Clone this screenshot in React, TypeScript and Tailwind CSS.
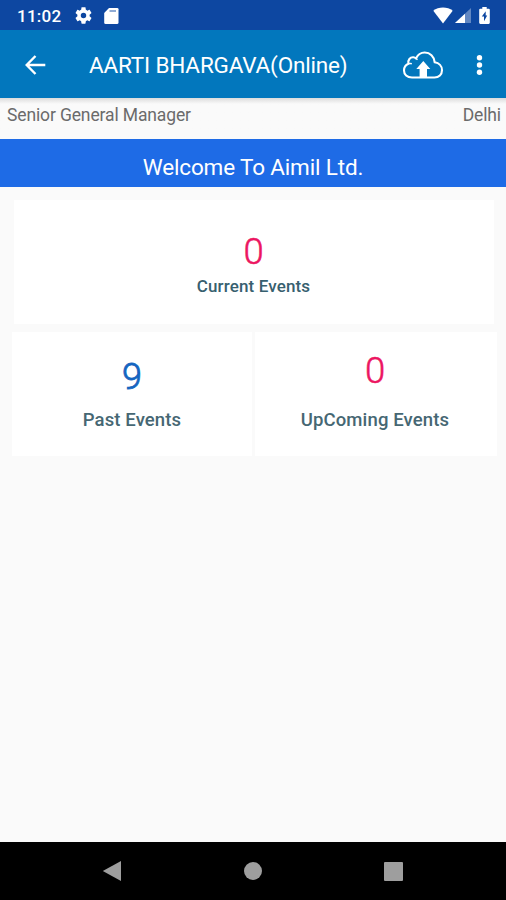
import React from "react";

function StatusBar() {
  return (
    <div className="flex h-[30px] shrink-0 items-center bg-[#0d47a1] pl-[17px] pr-[16px] text-white">
      <span className="w-[58px] whitespace-nowrap pt-px text-[17px] font-medium leading-[30px] tracking-[0.25px]">11:02</span>
      <svg className="mt-px h-[17px] w-[17px]" viewBox="2 2 20 20" fill="currentColor">
        <path d="M19.14 12.94c.04-.3.06-.61.06-.94 0-.32-.02-.64-.07-.94l2.03-1.58c.18-.14.23-.41.12-.61l-1.92-3.32c-.12-.22-.37-.29-.59-.22l-2.39.96c-.5-.38-1.03-.7-1.62-.94l-.36-2.54c-.04-.24-.24-.41-.48-.41h-3.84c-.24 0-.43.17-.47.41l-.36 2.54c-.59.24-1.13.57-1.62.94l-2.39-.96c-.22-.08-.47 0-.59.22L2.74 8.87c-.12.21-.08.47.12.61l2.03 1.58c-.05.3-.09.63-.09.94s.02.64.07.94l-2.03 1.58c-.18.14-.23.41-.12.61l1.92 3.32c.12.22.37.29.59.22l2.39-.96c.5.38 1.03.7 1.62.94l.36 2.54c.05.24.24.41.48.41h3.84c.24 0 .44-.17.47-.41l.36-2.54c.59-.24 1.13-.56 1.62-.94l2.39.96c.22.08.47 0 .59-.22l1.92-3.32c.12-.22.07-.47-.12-.61l-2.01-1.58zM12 15.2a3.2 3.2 0 1 1 0-6.4 3.2 3.2 0 0 1 0 6.4z" />
      </svg>
      <svg className="ml-[12px] mt-px h-[16px] w-[15px]" viewBox="0 0 15 16" fill="none">
        <path d="M5 0h8.2Q14.5 0 14.5 1.3v13.2Q14.5 16 13 16H1.6Q.2 16 .2 14.5V5z" fill="currentColor" />
        <path d="M5.500 3h6.500" stroke="#0d47a1" strokeWidth="1.400" opacity=".65" />
      </svg>
      <svg className="ml-auto h-[17px] w-[20px]" viewBox="0 0 20 17" fill="currentColor">
        <path d="M10 16.500.3 3.700C3 1.600 6.300.5 10 .5s7 1.100 9.700 3.200z" />
      </svg>
      <svg className="ml-[2px] mt-px h-[15px] w-[16px]" viewBox="0 0 16 16" preserveAspectRatio="none" fill="currentColor">
        <path d="M16 0v16H0z" opacity=".35" />
        <path d="M10 6v10H0z" />
      </svg>
      <svg className="ml-[8px] h-[17px] w-[11px]" viewBox="0 0 11 17" fill="none">
        <path d="M3.300 0h4.400v1.700H9.700q1.100 0 1.100 1.100v13q0 1.100-1.100 1.100H1.300Q.2 16.900.2 15.800v-13Q.2 1.700 1.300 1.700h2z" fill="currentColor" />
        <path d="M6.700 4.200 2.800 9.500h2.200v4.800L8.200 8.600H6.700z" fill="#0d47a1" />
      </svg>
    </div>
  );
}

function AppBar() {
  return (
    <header className="flex h-[68px] shrink-0 items-center bg-[#0277bd] pl-[24.5px] pr-[22px] text-white">
      <svg className="mt-[1px] h-[20px] w-[21px]" viewBox="0 0 21 20" fill="none" stroke="currentColor" strokeWidth="2.400">
        <path d="M10.500 1 1.700 10l8.800 9M2 10h18.300" />
      </svg>
      <h1 className="ml-[43.5px] w-[262px] whitespace-nowrap pt-[2px] text-[22.5px] font-normal leading-7 tracking-[-0.17px]">AARTI BHARGAVA(Online)</h1>
      <svg className="ml-[51px] mt-[1px] h-[28px] w-[42px]" viewBox="0 0 42 28" fill="none">
        <path d="M10 26.500C5 26.500 2 23.300 2 19.500c0-3.400 1.800-5.600 4.400-6.700C5.600 9 8.200 6 11.400 6.300c1 .1 1.800.5 2.600 1.100C15.600 4 18.800 1.500 22.700 1.500c5.300 0 9.500 3.800 10 9.800 4.300.7 7.300 3.800 7.300 7.900 0 4.100-3.100 7.300-7.500 7.300z" stroke="currentColor" strokeWidth="2.100" strokeLinejoin="round" />
        <path d="M6.400 12.800c1.200-.4 2.300-.4 3.400 0M14 7.400l1.500 1.300" stroke="currentColor" strokeWidth="1.500" />
        <path d="m21.300 10 7 8h-3.300v8.500h-7.400V18h-3.300z" fill="currentColor" />
      </svg>
      <svg className="ml-auto mt-[1px] h-[22px] w-[8px]" viewBox="0 0 8 22" fill="currentColor">
        <circle cx="3.500" cy="3.700" r="2.700" />
        <circle cx="3.500" cy="11" r="2.700" />
        <circle cx="3.500" cy="18.300" r="2.700" />
      </svg>
    </header>
  );
}

function NavBar() {
  return (
    <nav className="mt-auto flex h-[58px] shrink-0 items-center bg-black pl-[102px] pr-[103px] text-[#9e9e9e]">
      <svg className="h-[22px] w-[19px]" viewBox="0 0 19 22" fill="currentColor">
        <path d="M19 1v20L.8 11z" />
      </svg>
      <span className="ml-[123px] h-[18px] w-[18px] rounded-full bg-current" />
      <span className="ml-auto h-[19px] w-[19px] rounded-[1px] bg-current" />
    </nav>
  );
}

export default function App() {
  return (
    <div className="flex h-[900px] w-[506px] flex-col overflow-hidden bg-[#fafafa] font-[Roboto,sans-serif]">
      <StatusBar />
      <AppBar />
      <div className="flex h-[41px] shrink-0 justify-between bg-linear-to-b from-[#dcdcdc] to-[#fafafa] to-[6px] pl-[7px] pr-[5px] pt-[5px] text-[17.5px] leading-6 tracking-[-0.13px] text-[#6b6b6b]">
        <span>Senior General Manager</span>
        <span>Delhi</span>
      </div>
      <div className="h-[48px] shrink-0 bg-[#1e6be6] pt-[14px] text-center text-[22.5px] leading-7 tracking-[-0.15px] text-white">Welcome To Aimil Ltd.</div>
      <main className="pl-[12px] pr-[9px] pt-[13px]">
        <section className="ml-[2px] mr-[3px] flex h-[124px] flex-col items-center bg-white pr-[1px] pt-[32px]">
          <span className="text-[36.5px] font-light leading-10 text-[#ec1561] [-webkit-text-stroke:0.5px_currentColor]">0</span>
          <span className="mt-[2px] text-[17px] font-medium leading-6 tracking-[0.14px] text-[#37606f]">Current Events</span>
        </section>
        <div className="mt-[8px] flex h-[124px] gap-[3px]">
          <section className="flex w-[240px] flex-col items-center bg-white pt-[25px]">
            <span className="text-[36px] font-light leading-10 text-[#1565c0] [-webkit-text-stroke:0.8px_currentColor]">9</span>
            <span className="mt-[11px] text-[18.5px] font-medium leading-6 tracking-[0.12px] text-[#466773]">Past Events</span>
          </section>
          <section className="flex flex-1 flex-col items-center bg-white pr-[2px] pt-[19px]">
            <span className="text-[36.5px] font-light leading-10 text-[#ec1561] [-webkit-text-stroke:0.5px_currentColor]">0</span>
            <span className="mt-[17px] text-[18.5px] font-medium leading-6 tracking-[0.14px] text-[#466773]">UpComing Events</span>
          </section>
        </div>
      </main>
      <NavBar />
    </div>
  );
}
